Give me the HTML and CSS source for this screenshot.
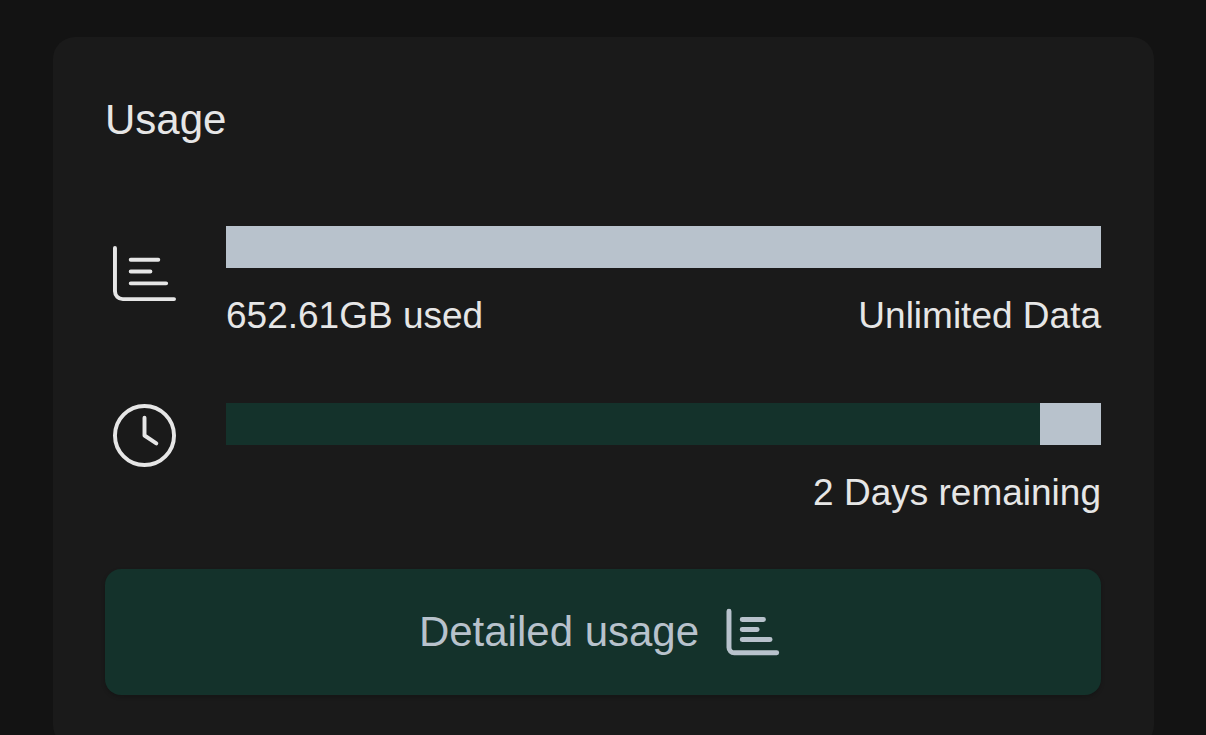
FILE: index.html
```html
<!doctype html>
<html lang="en">
<head>
	<meta charset="utf-8">
	<meta name="viewport" content="width=device-width, initial-scale=1">
	<title>Usage</title>
	<link rel="stylesheet" href="styles.css">
</head>
<body>

	<main class="card">
		<h1 class="card-title">Usage</h1>

		<section class="usage-row">
			<svg class="icon icon-data" viewBox="0 0 16 16" aria-hidden="true">
				<path d="M.5 1.5v11a2 2 0 0 0 2 2h13M4.5 4.5h7M4.5 7.5h5M4.5 10.5h9"/>
			</svg>
			<div class="meter">
				<progress class="bar" value="0" max="100" aria-label="Data used"></progress>
				<div class="meter-text">
					<span>652.61GB used</span>
					<span>Unlimited Data</span>
				</div>
			</div>
		</section>

		<section class="usage-row">
			<svg class="icon" viewBox="0 0 16 16" aria-hidden="true">
				<circle cx="8" cy="8" r="7.5"/>
				<path d="M8 3.5V8l3 2"/>
			</svg>
			<div class="meter">
				<progress class="bar" value="93" max="100" aria-label="Days passed"></progress>
				<div class="meter-text meter-text-end">
					<span>2 Days remaining</span>
				</div>
			</div>
		</section>

		<button class="button" type="button">
			Detailed usage
			<svg class="button-icon" viewBox="0 0 16 16" aria-hidden="true">
				<path d="M.9 1.6v10.9a1.6 1.6 0 0 0 1.6 1.6h12.8M4.9 4.1h6.4M4.9 7.1h4.5M4.9 10.1h8.4"/>
			</svg>
		</button>
	</main>

</body>
</html>
```

FILE: styles.css
```css
:root {
	--page-color: #131313;
	--card-color: #1a1a1a;
	--text-color: #e6e6e6;
	--green: #14322b;
	--silver: #b8c2cc;
}

* {
	box-sizing: border-box;
}
html {
	background-color: var(--page-color);
}
body {
	margin: 0;
	overflow: hidden;
	color: var(--text-color);
	font-family: "Liberation Sans", Arial, sans-serif;
	font-size: 37px;
	line-height: 56px;
}

.card {
	margin: 37px 52px 0 53px;
	padding: 52px 53px 52px 52px;
	border-radius: 22px;
	background-color: var(--card-color);
}
.card-title {
	margin: 0 0 75px;
	font-size: 42px;
	font-weight: normal;
	line-height: 62px;
}

.usage-row {
	display: flex;
	align-items: flex-start;
	gap: 50px;
	margin-bottom: 59px;
	padding-left: 8px;
}
.usage-row:last-of-type {
	margin-bottom: 48px;
}
.icon,
.button-icon {
	flex: none;
	fill: none;
	stroke: currentColor;
	stroke-linecap: round;
	stroke-linejoin: round;
	overflow: visible;
}
.icon {
	width: 63px;
	height: 63px;
	margin-top: 1px;
}
.icon-data {
	margin-top: 16px;
}

.meter {
	flex: 1;
}
.bar {
	display: block;
	width: 100%;
	height: 42px;
	margin-bottom: 20px;
	border: 0;
	appearance: none;
	background-color: var(--silver);
}
.bar::-webkit-progress-bar {
	background-color: var(--silver);
}
.bar::-webkit-progress-value {
	background-color: var(--green);
}
.bar::-moz-progress-bar {
	background-color: var(--green);
}
.meter-text {
	display: flex;
	justify-content: space-between;
}
.meter-text-end {
	justify-content: flex-end;
}

.button {
	display: flex;
	align-items: center;
	justify-content: center;
	gap: 27px;
	width: 100%;
	height: 126px;
	padding: 0;
	border: 0;
	border-radius: 16px;
	background-color: var(--green);
	box-shadow: 0 2px 4px rgba(0, 0, 0, .2);
	color: var(--silver);
	font: inherit;
	font-size: 42px;
	cursor: pointer;
}
.button-icon {
	width: 53px;
	height: 53px;
	margin-right: 8px;
	stroke-width: 1.5;
}
```
